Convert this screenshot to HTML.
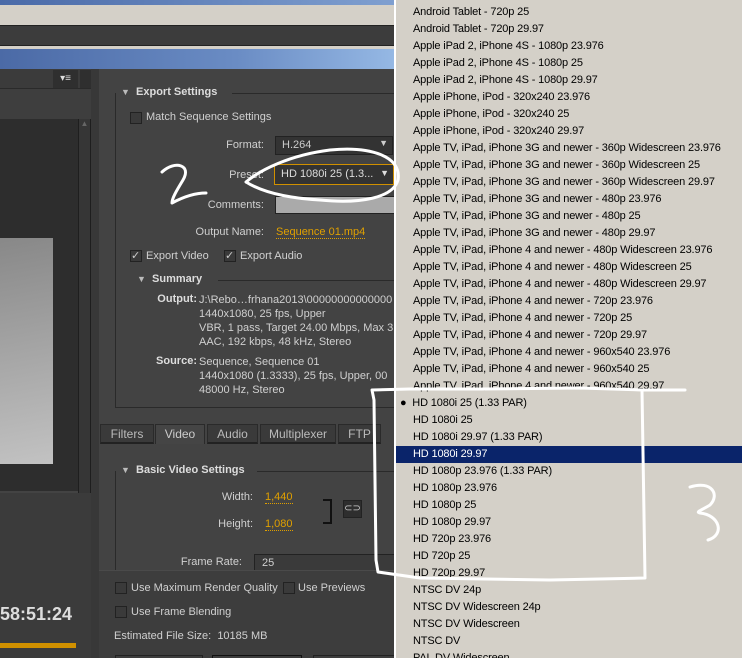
<!DOCTYPE html>
<html><head><style>
*{margin:0;padding:0;box-sizing:border-box}
html,body{width:742px;height:658px;overflow:hidden}
body{background:#434343;font-family:"Liberation Sans",sans-serif;font-size:11px;color:#d0d0d0;position:relative}
.a{position:absolute;white-space:nowrap}
.r{text-align:right}
.cb{position:absolute;width:12px;height:12px;border:1px solid #222;background:#3a3a3a}
.o{color:#e0a000;border-bottom:1px dotted #e0a000}
.h{font-weight:bold;color:#ddd}
.tab{position:absolute;top:424px;height:20px;background:#3a3a3a;border:1px solid #2a2a2a;border-bottom:2px solid #222;color:#bbb;text-align:center;line-height:18px;font-size:12px}
#list{position:absolute;left:394px;top:0;width:348px;height:658px;background:#d4d0c8;border-left:2px solid #fff;overflow:hidden}
#list div{position:absolute;left:17px;height:17px;line-height:17px;color:#000;font-size:11px;letter-spacing:-0.15px;white-space:nowrap}
</style></head><body>
<div class="a" style="left:0;top:0;width:394px;height:5px;background:linear-gradient(90deg,#4a6aa8,#7f9fd0)"></div>
<div class="a" style="left:0;top:5px;width:394px;height:20px;background:#d4d0c8"></div>
<div class="a" style="left:0;top:25px;width:394px;height:21px;background:#3c3c3c;border-top:1px solid #222;border-bottom:1px solid #222"></div>
<div class="a" style="left:0;top:46px;width:394px;height:3px;background:#d4d0c8"></div>
<div class="a" style="left:0;top:49px;width:394px;height:20px;background:linear-gradient(90deg,#4b6aa6,#6a8cc4 60%,#95b8e4)"></div>
<!-- left panel -->
<div class="a" style="left:0;top:69px;width:91px;height:20px;background:#3b3b3b;border-bottom:1px solid #2a2a2a"></div>
<div class="a" style="left:53px;top:70px;width:25px;height:18px;background:#2f2f2f;color:#ddd;font-size:10px;text-align:center;line-height:18px">▾≡</div>
<div class="a" style="left:80px;top:70px;width:11px;height:18px;background:#2f2f2f"></div>
<div class="a" style="left:0;top:89px;width:91px;height:30px;background:#3e3e3e"></div>
<div class="a" style="left:0;top:119px;width:79px;height:372px;background:#2d2d2d"></div>
<div class="a" style="left:0;top:238px;width:53px;height:226px;background:linear-gradient(170deg,#888,#c2c2c2)"></div>
<div class="a" style="left:78px;top:119px;width:13px;height:374px;background:#363636;border-left:1px solid #1e1e1e;border-right:1px solid #1e1e1e;color:#666;font-size:8px;text-align:center">▲</div>
<div class="a" style="left:0;top:493px;width:91px;height:165px;background:#3b3b3b"></div>
<div class="a" style="left:0;top:604px;font-size:18px;font-weight:bold;color:#ddd">58:51:24</div>
<div class="a" style="left:0;top:643px;width:76px;height:5px;background:#d09000"></div>
<div class="a" style="left:91px;top:69px;width:8px;height:589px;background:#383838"></div>
<!-- export settings -->
<div class="a" style="left:115px;top:93px;width:290px;height:315px;border-left:1px solid #2a2a2a;border-bottom:1px solid #2a2a2a"></div>
<div class="a" style="left:232px;top:93px;width:170px;height:1px;background:#2a2a2a"></div>
<div class="a h" style="left:121px;top:86px;font-size:11px"><span style="font-size:9px;color:#bbb">▼</span>&nbsp; Export Settings</div>
<div class="cb" style="left:130px;top:112px"></div>
<div class="a" style="left:146px;top:111px">Match Sequence Settings</div>
<div class="a r" style="left:200px;width:64px;top:139px">Format:</div>
<div class="a" style="left:275px;top:136px;width:118px;height:19px;background:#333;border:1px solid #222;color:#ccc;padding:2px 6px">H.264<span style="position:absolute;right:4px;top:1px;font-size:9px">▼</span></div>
<div class="a r" style="left:200px;width:64px;top:169px">Preset:</div>
<div class="a" style="left:274px;top:164px;width:120px;height:21px;background:#333;border:1px solid #d09000;color:#ddd;padding:3px 6px">HD 1080i 25 (1.3...<span style="position:absolute;right:4px;top:3px;font-size:9px">▼</span></div>
<div class="a r" style="left:190px;width:74px;top:199px">Comments:</div>
<div class="a" style="left:275px;top:196px;width:120px;height:18px;background:#aaa;border:1px solid #222"></div>
<div class="a r" style="left:180px;width:84px;top:226px">Output Name:</div>
<div class="a o" style="left:276px;top:226px">Sequence 01.mp4</div>
<div class="cb" style="left:130px;top:250px;color:#ccc;font-size:11px;line-height:10px">✓</div>
<div class="a" style="left:146px;top:250px">Export Video</div>
<div class="cb" style="left:224px;top:250px;color:#ccc;font-size:11px;line-height:10px">✓</div>
<div class="a" style="left:240px;top:250px">Export Audio</div>
<div class="a h" style="left:137px;top:273px"><span style="font-size:9px;color:#bbb">▼</span>&nbsp; Summary</div>
<div class="a" style="left:218px;top:280px;width:180px;height:1px;background:#2a2a2a"></div>
<div class="a h r" style="left:140px;width:57px;top:293px">Output:</div>
<div class="a" style="left:199px;top:293px;line-height:14px">J:\Rebo…frhana2013\00000000000000<br>1440x1080, 25 fps, Upper<br>VBR, 1 pass, Target 24.00 Mbps, Max 3<br>AAC, 192 kbps, 48 kHz, Stereo</div>
<div class="a h r" style="left:140px;width:57px;top:355px">Source:</div>
<div class="a" style="left:199px;top:355px;line-height:14px">Sequence, Sequence 01<br>1440x1080 (1.3333), 25 fps, Upper, 00<br>48000 Hz, Stereo</div>
<!-- tabs -->
<div class="tab" style="left:100px;width:54px">Filters</div>
<div class="tab" style="left:155px;width:50px;background:#454545;border-bottom:none;color:#ccc">Video</div>
<div class="tab" style="left:207px;width:51px">Audio</div>
<div class="tab" style="left:260px;width:76px">Multiplexer</div>
<div class="tab" style="left:338px;width:43px">FTP</div>
<div class="a" style="left:115px;top:471px;width:1px;height:100px;background:#2a2a2a"></div>
<div class="a h" style="left:121px;top:464px"><span style="font-size:9px;color:#bbb">▼</span>&nbsp; Basic Video Settings</div>
<div class="a" style="left:257px;top:471px;width:140px;height:1px;background:#2a2a2a"></div>
<div class="a r" style="left:200px;width:53px;top:491px">Width:</div>
<div class="a o" style="left:265px;top:491px">1,440</div>
<div class="a r" style="left:200px;width:53px;top:518px">Height:</div>
<div class="a o" style="left:265px;top:518px">1,080</div>
<div class="a" style="left:323px;top:499px;width:9px;height:25px;border:2px solid #111;border-left:none"></div>
<div class="a" style="left:343px;top:500px;width:19px;height:18px;background:#2e2e2e;border:1px solid #222;color:#ccc;font-size:10px;text-align:center;line-height:15px">⊂⊃</div>
<div class="a r" style="left:160px;width:82px;top:556px">Frame Rate:</div>
<div class="a" style="left:254px;top:554px;width:145px;height:20px;background:#3a3a3a;border:1px solid #222;padding:2px 7px">25</div>
<div class="a" style="left:99px;top:570px;width:295px;height:88px;background:#3d3d3d;border-top:1px solid #4a4a4a"></div>
<div class="cb" style="left:115px;top:582px"></div>
<div class="a" style="left:131px;top:582px">Use Maximum Render Quality</div>
<div class="cb" style="left:283px;top:582px"></div>
<div class="a" style="left:298px;top:582px">Use Previews</div>
<div class="cb" style="left:115px;top:606px"></div>
<div class="a" style="left:131px;top:606px">Use Frame Blending</div>
<div class="a" style="left:114px;top:630px">Estimated File Size:&nbsp; 10185 MB</div>
<div class="a" style="left:115px;top:655px;width:88px;height:3px;border:1px solid #222;border-bottom:none"></div>
<div class="a" style="left:212px;top:655px;width:90px;height:3px;border:1px solid #111;border-bottom:none"></div>
<div class="a" style="left:313px;top:655px;width:85px;height:3px;border:1px solid #222;border-bottom:none"></div>
<!-- list -->
<div id="list">
<div style="top:4px">Android Tablet - 720p 25</div>
<div style="top:21px">Android Tablet - 720p 29.97</div>
<div style="top:38px">Apple iPad 2, iPhone 4S - 1080p 23.976</div>
<div style="top:55px">Apple iPad 2, iPhone 4S - 1080p 25</div>
<div style="top:72px">Apple iPad 2, iPhone 4S - 1080p 29.97</div>
<div style="top:89px">Apple iPhone, iPod - 320x240 23.976</div>
<div style="top:106px">Apple iPhone, iPod - 320x240 25</div>
<div style="top:123px">Apple iPhone, iPod - 320x240 29.97</div>
<div style="top:140px">Apple TV, iPad, iPhone 3G and newer - 360p Widescreen 23.976</div>
<div style="top:157px">Apple TV, iPad, iPhone 3G and newer - 360p Widescreen 25</div>
<div style="top:174px">Apple TV, iPad, iPhone 3G and newer - 360p Widescreen 29.97</div>
<div style="top:191px">Apple TV, iPad, iPhone 3G and newer - 480p 23.976</div>
<div style="top:208px">Apple TV, iPad, iPhone 3G and newer - 480p 25</div>
<div style="top:225px">Apple TV, iPad, iPhone 3G and newer - 480p 29.97</div>
<div style="top:242px">Apple TV, iPad, iPhone 4 and newer - 480p Widescreen 23.976</div>
<div style="top:259px">Apple TV, iPad, iPhone 4 and newer - 480p Widescreen 25</div>
<div style="top:276px">Apple TV, iPad, iPhone 4 and newer - 480p Widescreen 29.97</div>
<div style="top:293px">Apple TV, iPad, iPhone 4 and newer - 720p 23.976</div>
<div style="top:310px">Apple TV, iPad, iPhone 4 and newer - 720p 25</div>
<div style="top:327px">Apple TV, iPad, iPhone 4 and newer - 720p 29.97</div>
<div style="top:344px">Apple TV, iPad, iPhone 4 and newer - 960x540 23.976</div>
<div style="top:361px">Apple TV, iPad, iPhone 4 and newer - 960x540 25</div>
<div style="top:378px">Apple TV, iPad, iPhone 4 and newer - 960x540 29.97</div>
<div style="top:395px;left:4px">●&nbsp; HD 1080i 25 (1.33 PAR)</div>
<div style="top:412px">HD 1080i 25</div>
<div style="top:429px">HD 1080i 29.97 (1.33 PAR)</div>
<div style="top:446px;left:0;width:346px;padding-left:17px;background:#0a246a;color:#fff">HD 1080i 29.97</div>
<div style="top:463px">HD 1080p 23.976 (1.33 PAR)</div>
<div style="top:480px">HD 1080p 23.976</div>
<div style="top:497px">HD 1080p 25</div>
<div style="top:514px">HD 1080p 29.97</div>
<div style="top:531px">HD 720p 23.976</div>
<div style="top:548px">HD 720p 25</div>
<div style="top:565px">HD 720p 29.97</div>
<div style="top:582px">NTSC DV 24p</div>
<div style="top:599px">NTSC DV Widescreen 24p</div>
<div style="top:616px">NTSC DV Widescreen</div>
<div style="top:633px">NTSC DV</div>
<div style="top:650px">PAL DV Widescreen</div>
</div>
<svg class="a" style="left:0;top:0" width="742" height="658" fill="none" stroke="#fff" stroke-width="3" stroke-linecap="round" stroke-linejoin="round">
<path d="M162 172 C175 160 192 165 183 180 C177 190 172 198 172 203 C185 196 196 193 206 193"/>
<path d="M246 182 C260 170 290 155 330 150 C370 146 402 156 398 180 C393 198 360 204 320 200 C285 198 262 192 246 182"/>
<path d="M372 390 L374 400 L376 560 L378 572 L420 578 L550 580 L645 578 L642 390 L580 388 L480 389 L410 389 L372 390"/>
<path d="M642 390 L685 390"/>
<path d="M690 487 C712 480 720 495 710 505 C702 510 695 512 700 513 C720 515 725 535 708 540"/>
</svg>
</body></html>
